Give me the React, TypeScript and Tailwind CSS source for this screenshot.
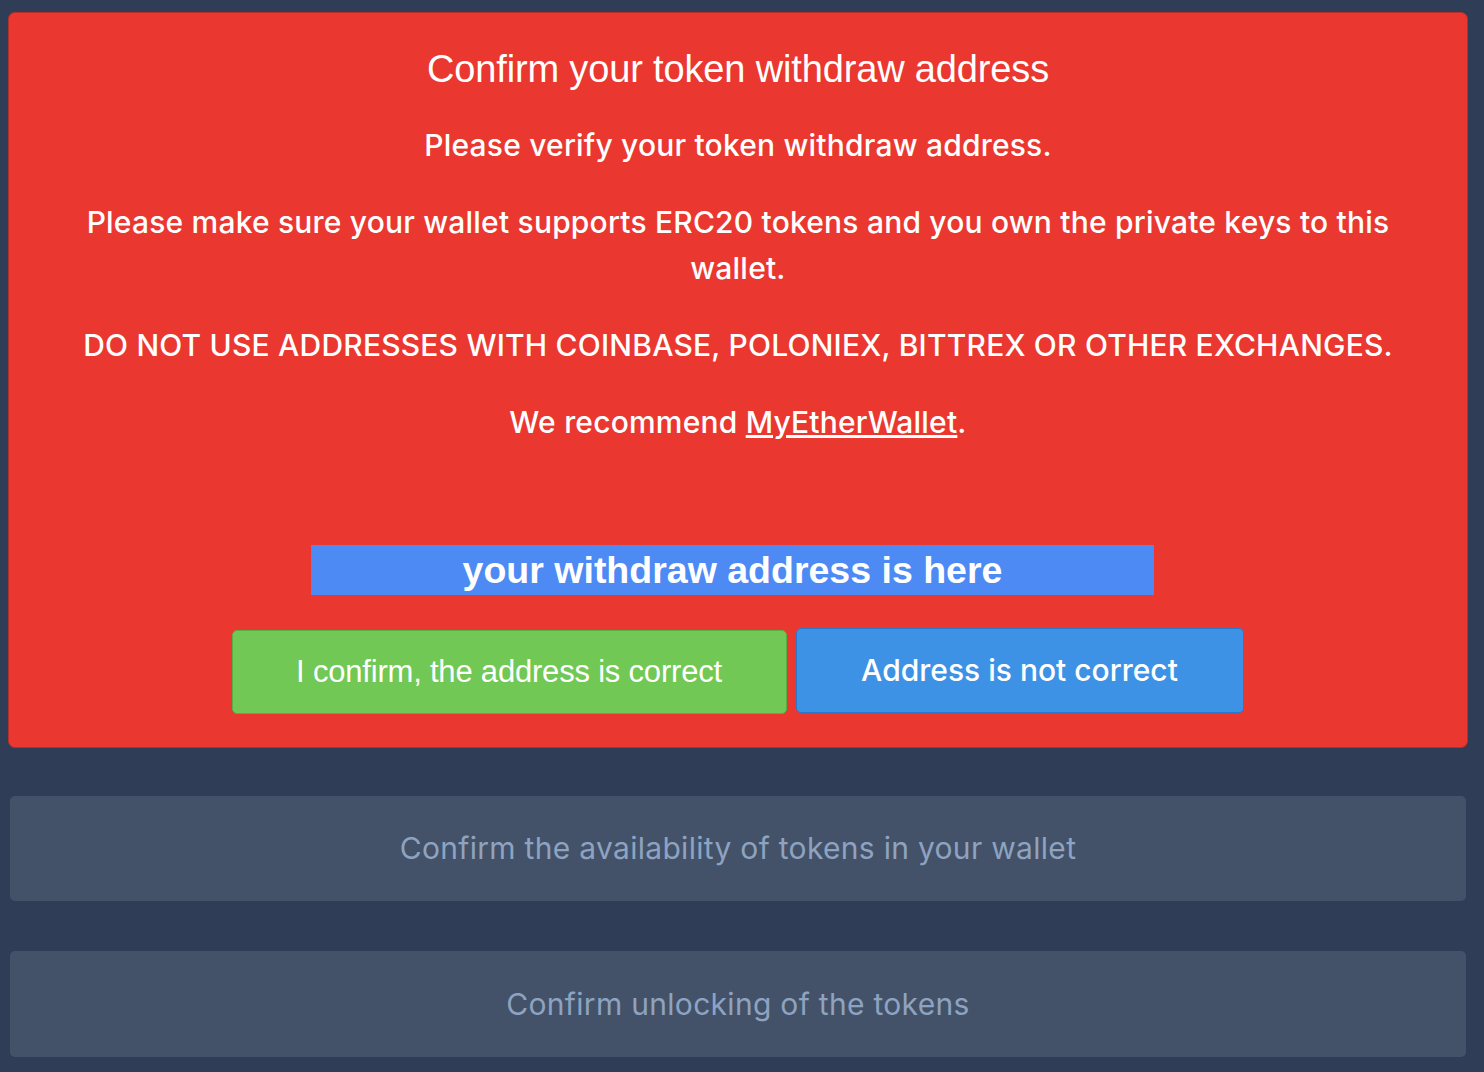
import React from "react";

export default function App() {
  return (
    <div className="min-h-[1072px] w-[1484px] bg-[#2f3e56] pt-[12px] pl-[8px] pr-[16px] pb-[20px] overflow-hidden" style={{ fontFamily: "Inter, 'Noto Sans', sans-serif" }}>
      <div className="w-[1460px] h-[736px] rounded-[7px] bg-[#ea3730] border border-[#b52f2c] flex flex-col items-center text-white">
        <h1 className="mt-[31px] text-[38px] leading-[50px] tracking-[-0.15px] font-normal" style={{ fontFamily: "'Liberation Sans', Arial, sans-serif" }}>
          Confirm your token withdraw address
        </h1>
        <div className="mt-[28px] w-[1340px] text-center text-[30px] leading-[46px] tracking-[0.2px] font-medium">
          <p>Please verify your token withdraw address.</p>
          <p className="mt-[31px]">Please make sure your wallet supports ERC20 tokens and you own the private keys to this wallet.</p>
          <p className="mt-[31px]">DO NOT USE ADDRESSES WITH COINBASE, POLONIEX, BITTREX OR OTHER EXCHANGES.</p>
          <p className="mt-[31px]">
            We recommend <a className="underline">MyEtherWallet</a>.
          </p>
        </div>
        <div className="mt-[100px] ml-[-11px] w-[843px] h-[50px] bg-[#4e8af3] flex items-center justify-center text-[37.5px] font-bold" style={{ fontFamily: "'Liberation Sans', Arial, sans-serif" }}>
          your withdraw address is here
        </div>
        <div className="mt-[33px] flex items-start gap-[9px] ml-[-1px]">
          <button className="mt-[2px] w-[555px] h-[84px] rounded-[5px] bg-[#71c855] border border-[#58ad44] text-[31px] tracking-[-0.2px] text-white" style={{ fontFamily: "'Liberation Sans', Arial, sans-serif" }}>
            I confirm, the address is correct
          </button>
          <button className="w-[448px] h-[85px] rounded-[5px] bg-[#3d92e6] border border-[#2879cc] text-[30px] font-medium text-white">
            Address is not correct
          </button>
        </div>
      </div>
      <div className="mt-[48px] ml-[2px] w-[1456px] h-[105px] rounded-[5px] bg-[#435269] flex items-center justify-center text-[30px] tracking-[0.3px] text-[#8ea3c0]">
        Confirm the availability of tokens in your wallet
      </div>
      <div className="mt-[50px] ml-[2px] w-[1456px] h-[106px] rounded-[5px] bg-[#435269] flex items-center justify-center text-[30px] tracking-[0.3px] text-[#8ea3c0]">
        Confirm unlocking of the tokens
      </div>
    </div>
  );
}
